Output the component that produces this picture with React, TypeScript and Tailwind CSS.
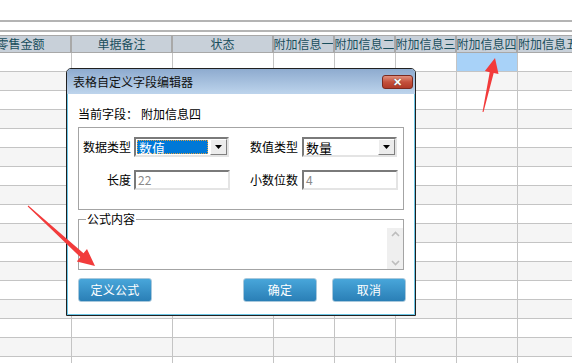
import React from "react";

const FONT = { fontFamily: '"Noto Sans CJK SC", "Noto Sans", sans-serif' };

const columns = [
  { title: "零售金额", w: "w-[101px]", align: "justify-center" },
  { title: "单据备注", w: "w-[101px]", align: "justify-center" },
  { title: "状态", w: "w-[101px]", align: "justify-center" },
  { title: "附加信息一", w: "w-[61px]", align: "justify-center" },
  { title: "附加信息二", w: "w-[61px]", align: "justify-center" },
  { title: "附加信息三", w: "w-[61px]", align: "justify-center" },
  { title: "附加信息四", w: "w-[61px]", align: "justify-center" },
  { title: "附加信息五", w: "w-[101px]", align: "justify-start" },
];

const rows = Array.from({ length: 17 }, (_, i) => i);

function Grid() {
  return (
    <div className="flex flex-col">
      <div className="h-[20px]" />
      <div className="h-[10px] border-t-2 border-[#b4b4b4]" />
      <div className="h-[5px] border-t-2 border-[#b4b4b4]" />
      <div className="-ml-[29px] flex">
        {columns.map((c) => (
          <div
            key={c.title}
            className={`${c.w} ${c.align} flex h-[18px] shrink-0 items-center overflow-hidden whitespace-nowrap border-y border-r-2 border-[#a8a8a8] bg-[#c8d0d9] text-[12px] leading-none text-[#184e5c]`}
          >
            {c.title}
          </div>
        ))}
      </div>
      {rows.map((r) => (
        <div key={r} className={`-ml-[29px] flex ${r % 2 === 1 ? "bg-[#f5f5f5]" : "bg-white"}`}>
          {columns.map((c, ci) => (
            <div
              key={c.title}
              className={`${c.w} h-[19px] shrink-0 border-b border-r border-[#c4c4c4] ${
                r === 0 && ci === 6 ? "bg-[#a8d2f8]" : ""
              }`}
            />
          ))}
        </div>
      ))}
    </div>
  );
}

function Select({ value, selected }: { value: string; selected?: boolean }) {
  return (
    <div className="flex h-[20px] w-[95px] items-center border-2 border-t-[#7a7a7a] border-l-[#7a7a7a] border-r-[#e4e4e4] border-b-[#e4e4e4] bg-white pl-[1px]">
      <div className="flex-1 h-full py-[1px] pr-[2px]">
        {selected ? (
          <div className="h-full border border-dotted border-[#e0a040] bg-[#0078d7] pl-[1px] text-[13px] leading-[14px] text-white">
            {value}
          </div>
        ) : (
          <div className="pl-[1px] text-[13px] leading-[16px] text-black">{value}</div>
        )}
      </div>
      <div className="flex h-full w-[17px] items-center justify-center border border-t-white border-l-white border-r-[#808080] border-b-[#808080] bg-[#ececec]">
        <svg width="7" height="4" viewBox="0 0 7 4">
          <polygon points="0,0 7,0 3.5,4" fill="#000" />
        </svg>
      </div>
    </div>
  );
}

function Input({ value }: { value: string }) {
  return (
    <div className="flex h-[20px] w-[96px] items-center border-2 border-t-[#7a7a7a] border-l-[#7a7a7a] border-r-[#e4e4e4] border-b-[#e4e4e4] bg-white pl-[2px] text-[12px] text-[#8a8a8a]">
      {value}
    </div>
  );
}

function BlueButton({ label }: { label: string }) {
  return (
    <button className="h-[24px] w-[74px] rounded-[3px] border border-[#a8c8dc] bg-gradient-to-b from-[#48a6da] to-[#2a7fb6] text-[12px] tracking-wide text-white">
      {label}
    </button>
  );
}

function Dialog() {
  return (
    <div className="absolute left-[66px] top-[68px] flex h-[248px] w-[350px] flex-col overflow-hidden rounded-t-[5px] border border-[#202020] bg-white text-[12px] text-black">
      <div className="flex h-[25px] shrink-0 items-center justify-between bg-gradient-to-b from-[#8eabcf] to-[#bdd4ec] pl-[6px] pr-[2px]">
        <span className="text-[12px] text-[#111]">表格自定义字段编辑器</span>
        <div className="flex h-[14px] w-[31px] items-center justify-center rounded-[3px] border border-[#7a2a20] bg-gradient-to-b from-[#e0907e] via-[#c4503c] to-[#b03a28]">
          <span className="text-[11px] font-bold leading-none text-white [text-shadow:0_0_1px_#333]">✕</span>
        </div>
      </div>
      <div className="flex flex-1 flex-col border-b border-r border-l border-[#6cc6e6] pl-[10px] pr-[10px]">
        <div className="mt-[13px] flex gap-[3px] leading-[14px]">
          <span>当前字段：</span>
          <span>附加信息四</span>
        </div>
        <div className="mt-[6px] flex h-[83px] flex-col gap-[13px] border border-[#a4a4a4] pl-[4px] pt-[9px]">
          <div className="flex items-center">
            <span className="w-[48px] text-right">数据类型</span>
            <div className="ml-[3px]">
              <Select value="数值" selected />
            </div>
            <span className="ml-[21px] w-[48px] text-right">数值类型</span>
            <div className="ml-[4px]">
              <Select value="数量" />
            </div>
          </div>
          <div className="flex items-center">
            <span className="w-[48px] text-right">长度</span>
            <div className="ml-[3px]">
              <Input value="22" />
            </div>
            <span className="ml-[20px] w-[48px] text-right">小数位数</span>
            <div className="ml-[4px]">
              <Input value="4" />
            </div>
          </div>
        </div>
        <div className="relative mt-[9px] flex h-[51px] justify-end border border-[#a4a4a4] pt-[8px]">
          <span className="absolute -top-[8px] left-[7px] bg-white px-[1px] leading-[14px]">公式内容</span>
          <div className="flex w-[16px] flex-col items-center justify-between bg-[#efefef] py-[3px]">
            <svg width="9" height="6" viewBox="0 0 9 6">
              <polyline points="1,5 4.5,1.5 8,5" fill="none" stroke="#bdbdbd" strokeWidth="1.6" />
            </svg>
            <svg width="9" height="6" viewBox="0 0 9 6">
              <polyline points="1,1 4.5,4.5 8,1" fill="none" stroke="#bdbdbd" strokeWidth="1.6" />
            </svg>
          </div>
        </div>
        <div className="-mr-[2px] mt-[8px] flex items-center">
          <BlueButton label="定义公式" />
          <div className="flex-1" />
          <BlueButton label="确定" />
          <div className="w-[15px]" />
          <BlueButton label="取消" />
        </div>
      </div>
    </div>
  );
}

function Arrows() {
  return (
    <svg className="pointer-events-none absolute left-0 top-0" width="572" height="363" viewBox="0 0 572 363">
      <polygon
        points="27.7,206.4 80.3,257.1 76.8,261.4 95,266 87,249 83.5,253.3 28.3,205.6"
        fill="#f23b3b"
      />
      <polygon
        points="482.5,111.9 489.7,72.2 484.9,71.1 495,58 498.5,74.1 493.7,73 483.5,112.1"
        fill="#f23b3b"
      />
    </svg>
  );
}

export default function App() {
  return (
    <div className="relative h-[363px] w-[572px] overflow-hidden bg-white" style={FONT}>
      <Grid />
      <Dialog />
      <Arrows />
    </div>
  );
}
